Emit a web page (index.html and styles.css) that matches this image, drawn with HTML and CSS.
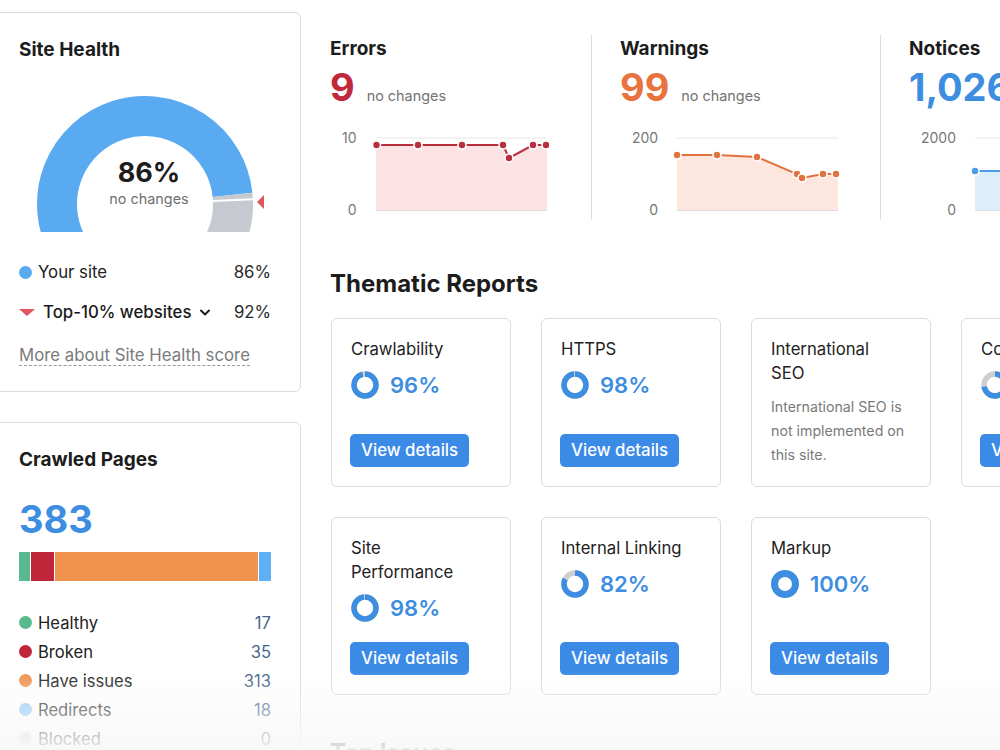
FILE: index.html
```html
<!DOCTYPE html>
<html lang="en">
<head>
<meta charset="utf-8">
<title>Site Audit</title>
<link rel="stylesheet" href="styles.css">
</head>
<body>
<div class="page">
  <aside class="sidebar">
    <section class="card side-card">
      <h2 class="card-title">Site Health</h2>
      <div class="gauge">
        <svg class="gauge-svg" width="260" height="140" viewBox="0 0 260 140">
          <path d="M49.79 156 A88 88 0 1 1 213.52 102.8" stroke="#5aaaf2" stroke-width="40" fill="none"/>
          <path d="M213.52 102.8 A88 88 0 0 1 202.21 156" stroke="#c6c9d0" stroke-width="40" fill="none"/>
          <line x1="193.9" y1="109" x2="234" y2="107.3" stroke="#ffffff" stroke-width="2"/>
          <polygon points="238,110 245,103 245,117" fill="#e0555f"/>
        </svg>
        <div class="gauge-value">86%</div>
        <div class="gauge-sub">no changes</div>
      </div>
      <div class="health-legend">
        <div class="legend-row">
          <span class="legend-label"><span class="dot dot-site"></span>Your site</span>
          <span class="legend-value">86%</span>
        </div>
        <div class="legend-row">
          <span class="legend-label strong"><span class="tri-down"></span>Top-10% websites
            <svg class="chev" width="12" height="8" viewBox="0 0 12 8"><path d="M2 1.5 L6 5.5 L10 1.5" stroke="#1f1f1f" stroke-width="2" fill="none" stroke-linecap="round" stroke-linejoin="round"/></svg>
          </span>
          <span class="legend-value">92%</span>
        </div>
      </div>
      <a class="more-link">More about Site Health score</a>
    </section>

    <section class="card side-card crawled">
      <h2 class="card-title">Crawled Pages</h2>
      <div class="big-number blue">383</div>
      <div class="stack-bar">
        <span class="seg seg-healthy" style="flex: 17"></span>
        <span class="seg seg-broken" style="flex: 35"></span>
        <span class="seg seg-issues" style="flex: 313"></span>
        <span class="seg seg-redirects" style="flex: 18"></span>
      </div>
      <ul class="pages-legend">
        <li class="pl-row"><span class="legend-label"><span class="dot dot-healthy"></span>Healthy</span><span class="pl-value">17</span></li>
        <li class="pl-row"><span class="legend-label"><span class="dot dot-broken"></span>Broken</span><span class="pl-value">35</span></li>
        <li class="pl-row"><span class="legend-label"><span class="dot dot-issues"></span>Have issues</span><span class="pl-value">313</span></li>
        <li class="pl-row"><span class="legend-label"><span class="dot dot-redirects"></span>Redirects</span><span class="pl-value">18</span></li>
        <li class="pl-row"><span class="legend-label"><span class="dot dot-blocked"></span>Blocked</span><span class="pl-value">0</span></li>
      </ul>
    </section>
  </aside>

  <main class="main">
    <div class="stats">
      <div class="stat">
        <h3 class="stat-title">Errors</h3>
        <div class="stat-number"><span class="num red">9</span><span class="delta">no changes</span></div>
        <div class="chart">
          <div class="axis"><span>10</span><span>0</span></div>
          <div class="plot">
            <svg width="171" height="88">
              <line x1="0" y1="8" x2="171" y2="8" stroke="#e8e8e8" stroke-width="1"/>
              <polygon points="0,15 42,15 86,15 127,15 133,28 157,15 171,15 171,80 0,80" fill="#fde3e4"/>
              <line x1="0" y1="80.5" x2="171" y2="80.5" stroke="#dcdcdc" stroke-width="1"/>
              <polyline points="0.5,15 42,15 86,15 127,15 133,28 157,15 170,15" fill="none" stroke="#b8303f" stroke-width="2"/>
              <g fill="#b8303f" stroke="#ffffff" stroke-width="1.6">
                <circle cx="0.5" cy="15" r="4"/><circle cx="42" cy="15" r="4"/><circle cx="86" cy="15" r="4"/>
                <circle cx="127" cy="15" r="4"/><circle cx="133" cy="28" r="4"/><circle cx="157" cy="15" r="4"/><circle cx="170" cy="15" r="4"/>
              </g>
            </svg>
          </div>
        </div>
      </div>
      <div class="stat">
        <h3 class="stat-title">Warnings</h3>
        <div class="stat-number"><span class="num orange">99</span><span class="delta">no changes</span></div>
        <div class="chart">
          <div class="axis"><span>200</span><span>0</span></div>
          <div class="plot">
            <svg width="161" height="88">
              <line x1="0" y1="8" x2="161" y2="8" stroke="#e8e8e8" stroke-width="1"/>
              <polygon points="0,25 40,25 80,27 120,44 125,48 146,44 161,44 161,80 0,80" fill="#fde6dd"/>
              <line x1="0" y1="80.5" x2="161" y2="80.5" stroke="#dcdcdc" stroke-width="1"/>
              <polyline points="0,25 40,25 80,27 120,44 125,48 146,44 159,44" fill="none" stroke="#e0733f" stroke-width="2"/>
              <g fill="#e0733f" stroke="#ffffff" stroke-width="1.6">
                <circle cx="0" cy="25" r="4"/><circle cx="40" cy="25" r="4"/><circle cx="80" cy="27" r="4"/>
                <circle cx="120" cy="44" r="4"/><circle cx="125" cy="48" r="4"/><circle cx="146" cy="44" r="4"/><circle cx="159" cy="44" r="4"/>
              </g>
            </svg>
          </div>
        </div>
      </div>
      <div class="stat">
        <h3 class="stat-title">Notices</h3>
        <div class="stat-number"><span class="num blue">1,026</span><span class="delta">no changes</span></div>
        <div class="chart">
          <div class="axis"><span>2000</span><span>0</span></div>
          <div class="plot">
            <svg width="151" height="88">
              <line x1="0" y1="8" x2="151" y2="8" stroke="#e8e8e8" stroke-width="1"/>
              <polygon points="0,41 40,41 80,41 120,42 125,43 146,42 151,42 151,80 0,80" fill="#dcedfc"/>
              <line x1="0" y1="80.5" x2="151" y2="80.5" stroke="#dcdcdc" stroke-width="1"/>
              <polyline points="0,41 40,41 80,41 120,42 125,43 146,42 149,42" fill="none" stroke="#4a9be8" stroke-width="2"/>
              <g fill="#4a9be8" stroke="#ffffff" stroke-width="1.6">
                <circle cx="0" cy="41" r="4"/><circle cx="40" cy="41" r="4"/><circle cx="80" cy="41" r="4"/>
                <circle cx="120" cy="42" r="4"/><circle cx="125" cy="43" r="4"/><circle cx="146" cy="42" r="4"/>
              </g>
            </svg>
          </div>
        </div>
      </div>
    </div>

    <h2 class="section-title">Thematic Reports</h2>
    <div class="reports">
      <div class="card report">
        <div class="report-title">Crawlability</div>
        <div class="score">
          <svg class="ring" width="28" height="28" viewBox="0 0 28 28"><circle cx="14" cy="14" r="11" class="ring-bg"/><circle cx="14" cy="14" r="11" class="ring-fg" stroke-dasharray="66.35 69.12" transform="rotate(-90 14 14)"/></svg>
          <span class="score-value">96%</span>
        </div>
        <button class="btn">View details</button>
      </div>
      <div class="card report">
        <div class="report-title">HTTPS</div>
        <div class="score">
          <svg class="ring" width="28" height="28" viewBox="0 0 28 28"><circle cx="14" cy="14" r="11" class="ring-bg"/><circle cx="14" cy="14" r="11" class="ring-fg" stroke-dasharray="67.73 69.12" transform="rotate(-90 14 14)"/></svg>
          <span class="score-value">98%</span>
        </div>
        <button class="btn">View details</button>
      </div>
      <div class="card report">
        <div class="report-title">International SEO</div>
        <p class="report-note">International SEO is not implemented on this site.</p>
      </div>
      <div class="card report">
        <div class="report-title">Core Web Vitals</div>
        <div class="score">
          <svg class="ring" width="28" height="28" viewBox="0 0 28 28"><circle cx="14" cy="14" r="11" class="ring-bg"/><circle cx="14" cy="14" r="11" class="ring-fg" stroke-dasharray="49.76 69.12" transform="rotate(-90 14 14)"/></svg>
          <span class="score-value">72%</span>
        </div>
        <button class="btn">View details</button>
      </div>
      <div class="card report">
        <div class="report-title">Site Performance</div>
        <div class="score">
          <svg class="ring" width="28" height="28" viewBox="0 0 28 28"><circle cx="14" cy="14" r="11" class="ring-bg"/><circle cx="14" cy="14" r="11" class="ring-fg" stroke-dasharray="67.73 69.12" transform="rotate(-90 14 14)"/></svg>
          <span class="score-value">98%</span>
        </div>
        <button class="btn">View details</button>
      </div>
      <div class="card report">
        <div class="report-title">Internal Linking</div>
        <div class="score">
          <svg class="ring" width="28" height="28" viewBox="0 0 28 28"><circle cx="14" cy="14" r="11" class="ring-bg"/><circle cx="14" cy="14" r="11" class="ring-fg" stroke-dasharray="56.68 69.12" transform="rotate(-90 14 14)"/></svg>
          <span class="score-value">82%</span>
        </div>
        <button class="btn">View details</button>
      </div>
      <div class="card report">
        <div class="report-title">Markup</div>
        <div class="score">
          <svg class="ring" width="28" height="28" viewBox="0 0 28 28"><circle cx="14" cy="14" r="10.5" class="ring-full"/></svg>
          <span class="score-value">100%</span>
        </div>
        <button class="btn">View details</button>
      </div>
    </div>

    <h2 class="section-title next">Top Issues</h2>
  </main>
</div>
<div class="fade"></div>
</body>
</html>
```

FILE: styles.css
```css
* {
  box-sizing: border-box;
}

html, body {
  margin: 0;
  padding: 0;
  background: #ffffff;
  overflow: hidden;
}

body {
  font-family: "Inter", "Noto Sans", "Liberation Sans", sans-serif;
  color: #1f1f1f;
  width: 1000px;
  height: 750px;
}

h2, h3, p, ul {
  margin: 0;
  padding: 0;
}

.page {
  display: flex;
  gap: 29px;
  margin-left: -10px;
  width: 1500px;
}

/* ---------- sidebar ---------- */
.sidebar {
  flex: none;
  width: 311px;
  padding-top: 12px;
  display: flex;
  flex-direction: column;
  gap: 30px;
}

.card {
  background: #ffffff;
  border: 1px solid #dcdcdc;
  border-radius: 6px;
}

.side-card {
  padding: 25px 29px 25px 28px;
}

.card-title {
  font-size: 19px;
  line-height: 24px;
  font-weight: 700;
  color: #1c1c1c;
}

.gauge {
  position: relative;
  width: 260px;
  height: 140px;
  margin-top: 30px;
}

.gauge-svg {
  display: block;
}

.gauge-value {
  position: absolute;
  left: 0;
  right: 0;
  top: 63px;
  text-align: center;
  font-size: 27px;
  line-height: 36px;
  font-weight: 700;
  color: #1c1c1c;
}

.gauge-sub {
  position: absolute;
  left: 0;
  right: 0;
  top: 98px;
  text-align: center;
  font-size: 14.4px;
  line-height: 18px;
  color: #6f6f6f;
}

.health-legend {
  margin-top: 28px;
  display: flex;
  flex-direction: column;
  gap: 16px;
}

.legend-row {
  display: flex;
  justify-content: space-between;
  align-items: center;
  height: 24px;
  font-size: 16.8px;
  line-height: 24px;
}

.legend-label {
  display: flex;
  align-items: center;
  color: #222;
}

.legend-label.strong {
  font-weight: 500;
  color: #1a1a1a;
}

.legend-value {
  color: #2b2b2b;
}

.dot {
  width: 13px;
  height: 13px;
  border-radius: 50%;
  margin-right: 6px;
  flex: none;
}

.dot-site { background: #5aaaf2; }
.dot-healthy { background: #59b98f; }
.dot-broken { background: #c0263a; }
.dot-issues { background: #f0934f; }
.dot-redirects { background: #8ec8f7; }
.dot-blocked { background: #d8d8d8; }

.tri-down {
  width: 0;
  height: 0;
  border-left: 8px solid transparent;
  border-right: 8px solid transparent;
  border-top: 7px solid #e0555f;
  margin-right: 8px;
}

.chev {
  margin-left: 8px;
  margin-top: 1px;
}

.more-link {
  display: inline-block;
  margin-top: 21px;
  font-size: 16.8px;
  line-height: 20px;
  color: #7a7a7a;
  border-bottom: 1px dashed #9a9a9a;
}

.crawled {
  height: 420px;
}

.big-number {
  margin-top: 24px;
  font-size: 38px;
  line-height: 46px;
  font-weight: 700;
}

.blue { color: #3d8de0; }
.red { color: #c2283b; }
.orange { color: #e8733f; }

.stack-bar {
  display: flex;
  gap: 1px;
  height: 29px;
  margin-top: 10px;
}

.seg { display: block; height: 100%; }
.seg-healthy { background: #59b98f; }
.seg-broken { background: #c0263a; }
.seg-issues { background: #f0934f; }
.seg-redirects { background: #5fb0f2; }

.pages-legend {
  list-style: none;
  margin-top: 27px;
}

.pl-row {
  display: flex;
  justify-content: space-between;
  align-items: center;
  height: 29px;
  font-size: 16.6px;
}

.pl-value {
  color: #44678a;
}

/* ---------- main ---------- */
.main {
  flex: none;
  width: 1100px;
  padding-top: 35px;
}

.stats {
  display: flex;
}

.stat {
  width: 261px;
  box-sizing: content-box;
  border-right: 1px solid #dedede;
  padding-top: 2px;
  height: 183px;
}

.stat + .stat {
  padding-left: 28px;
  width: 260px;
}

.stat-title {
  font-size: 19px;
  line-height: 24px;
  font-weight: 700;
  color: #1c1c1c;
}

.stat-number {
  margin-top: 4px;
  display: flex;
  align-items: baseline;
  white-space: nowrap;
}

.num {
  font-size: 38px;
  line-height: 44px;
  font-weight: 700;
}

.delta {
  margin-left: 12px;
  font-size: 14.4px;
  color: #737373;
}

.chart {
  display: flex;
  gap: 19px;
  width: 218px;
  padding-left: 12px;
  margin-top: 21px;
  box-sizing: content-box;
}

.axis {
  display: flex;
  flex-direction: column;
  justify-content: space-between;
  align-items: flex-end;
  height: 88px;
  font-size: 14px;
  line-height: 16px;
  color: #777777;
}

.plot svg {
  display: block;
  overflow: visible;
}

.section-title {
  margin-top: 48px;
  font-size: 24px;
  line-height: 32px;
  font-weight: 700;
  color: #1c1c1c;
}

.section-title.next {
  margin-top: 42px;
}

.reports {
  margin-top: 18px;
  margin-left: 1px;
  display: grid;
  grid-template-columns: repeat(4, 180px);
  gap: 30px;
}

.report {
  padding: 18px 25px 19px 19px;
  display: flex;
  flex-direction: column;
  align-items: flex-start;
}

.report-title {
  font-size: 16.7px;
  line-height: 24px;
  color: #222;
}

.report-note {
  margin-top: 10px;
  font-size: 14.2px;
  line-height: 24px;
  color: #7a7a7a;
}

.score {
  margin-top: 10px;
  margin-bottom: 20px;
  display: flex;
  align-items: center;
  gap: 11px;
  height: 28px;
  white-space: nowrap;
}

.ring {
  display: block;
  flex: none;
}

.ring-bg {
  fill: none;
  stroke: #cfcfcf;
  stroke-width: 5.5;
}

.ring-fg {
  fill: none;
  stroke: #3d8de0;
  stroke-width: 5.5;
}

.ring-full {
  fill: none;
  stroke: #3d8de0;
  stroke-width: 7;
}

.score-value {
  font-size: 22px;
  line-height: 28px;
  font-weight: 600;
  color: #3d8de0;
}

.btn {
  margin-top: auto;
  margin-left: -1px;
  height: 33px;
  padding: 0 11px;
  border: none;
  border-radius: 5px;
  background: #3a8ae6;
  color: #ffffff;
  font-family: inherit;
  font-size: 16.8px;
  font-weight: 500;
  line-height: 33px;
  white-space: nowrap;
}

.fade {
  position: fixed;
  left: 0;
  right: 0;
  bottom: 0;
  height: 80px;
  background: linear-gradient(to bottom, rgba(248, 248, 248, 0), rgba(248, 248, 248, 0.93));
  pointer-events: none;
}
```
